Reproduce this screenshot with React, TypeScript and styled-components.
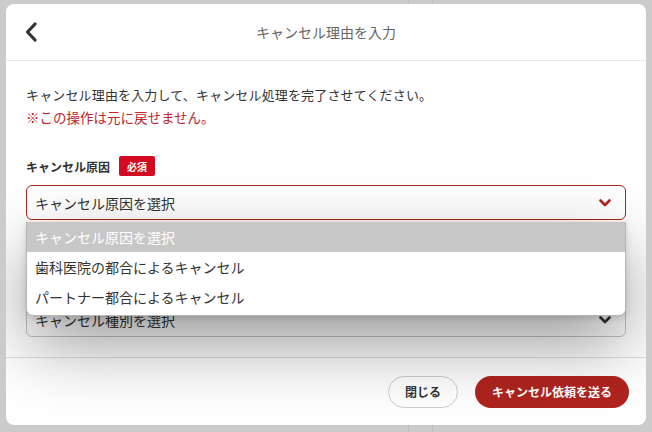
import React from 'react';
import styled, { createGlobalStyle } from 'styled-components';

const GlobalStyle = createGlobalStyle`
    * {
        box-sizing: border-box;
    }
    body {
        margin: 0;
        font-family: "Noto Sans CJK JP", "Noto Sans", sans-serif;
        background: #cbcbcb;
        color: #333;
    }
`;

const RED = '#b0241e';

const reasons = ['キャンセル原因を選択', '歯科医院の都合によるキャンセル', 'パートナー都合によるキャンセル'];

function ChevronDown({ color }: { color: string }) {
    return (
        <svg width="12" height="8" viewBox="0 0 12 8">
            <path d="M1.5 1.5 L6 6 L10.5 1.5" fill="none" stroke={color} strokeWidth="2.6" strokeLinecap="round" strokeLinejoin="round" />
        </svg>
    );
}

function App() {
    return (
        <>
            <GlobalStyle />
            <Page>
                {/* 背景のページ (オーバーレイで隠れている) */}
                <Backdrop>
                    <BackCol />
                    <BackCol />
                    <BackCol />
                </Backdrop>

                <Modal>
                    <Header>
                        <BackButton aria-label="戻る">
                            <svg width="14" height="20" viewBox="0 0 14 20">
                                <path d="M11 2 L3.5 10 L11 18" fill="none" stroke="#333" strokeWidth="3.2" strokeLinecap="round" strokeLinejoin="round" />
                            </svg>
                        </BackButton>
                        <Title>キャンセル理由を入力</Title>
                    </Header>

                    <Body>
                        <Lead>キャンセル理由を入力して、キャンセル処理を完了させてください。</Lead>
                        <Warning>※この操作は元に戻せません。</Warning>

                        <Field>
                            <LabelRow>
                                <Label>キャンセル原因</Label>
                                <Required>必須</Required>
                            </LabelRow>
                            <SelectBox $active>
                                <SelectText>キャンセル原因を選択</SelectText>
                                <ChevronDown color={RED} />
                            </SelectBox>
                            <OptionList>
                                {reasons.map((r, i) => (
                                    <OptionItem key={r} $highlighted={i === 0}>
                                        {r}
                                    </OptionItem>
                                ))}
                            </OptionList>
                        </Field>

                        {/* 2つ目の項目 (ラベルはドロップダウンの下に隠れている) */}
                        <Field $spaced>
                            <SelectBox>
                                <SelectText>キャンセル種別を選択</SelectText>
                                <ChevronDown color="#333" />
                            </SelectBox>
                        </Field>
                    </Body>

                    <Footer>
                        <OutlineButton>閉じる</OutlineButton>
                        <PrimaryButton>キャンセル依頼を送る</PrimaryButton>
                    </Footer>
                </Modal>
            </Page>
        </>
    );
}

export default App;

const Page = styled.div`
    position: relative;
    width: 652px;
    height: 432px;
    overflow: hidden;
    background: #cbcbcb;
`;

const Backdrop = styled.div`
    display: grid;
    grid-template-columns: 409px 24px 1fr;
    height: 100%;
`;

const BackCol = styled.div`
    border-right: 1px solid #bdbdbd;

    &:last-child {
        border-right: none;
    }
`;

const Modal = styled.div`
    position: absolute;
    top: 4px;
    left: 6px;
    width: 640px;
    height: 421px;

    display: flex;
    flex-direction: column;

    background: #fff;
    border-radius: 8px;
    overflow: hidden;
`;

const Header = styled.div`
    position: relative;
    height: 57px;
    flex-shrink: 0;

    display: flex;
    align-items: center;
    justify-content: center;

    border-bottom: 1px solid #e6e6e6;
`;

const BackButton = styled.div`
    position: absolute;
    left: 18px;
    top: 18px;

    display: flex;
`;

const Title = styled.h1`
    margin: 0;

    font-size: 14px;
    font-weight: 400;
    color: #666;
    line-height: 20px;
`;

const Body = styled.div`
    padding: 23px 20px 20px;
    border-bottom: 1px solid #dedede;
`;

const Lead = styled.p`
    margin: 0;
    font-size: 13px;
    letter-spacing: 0.15px;
    line-height: 22px;
    color: #333;
`;

const Warning = styled.p`
    margin: 0;
    font-size: 13.5px;
    line-height: 22px;
    color: #c0262b;
`;

const Field = styled.div<{ $spaced?: boolean }>`
    position: relative;
    margin-top: ${(p) => (p.$spaced ? '82px' : '28px')};
`;

const LabelRow = styled.div`
    display: flex;
    align-items: center;
    gap: 9px;

    height: 20px;
    margin-bottom: 9px;
`;

const Label = styled.span`
    font-size: 12px;
    font-weight: 700;
    color: #333;
`;

const Required = styled.span`
    display: inline-flex;
    align-items: center;
    justify-content: center;

    width: 36px;
    height: 20px;
    border-radius: 2px;

    background: #d40a22;
    color: #fff;
    font-size: 10px;
    font-weight: 700;
`;

const SelectBox = styled.div<{ $active?: boolean }>`
    display: flex;
    align-items: center;
    justify-content: space-between;

    height: 35px;
    padding: 0 14px 0 8px;

    border: 1px solid ${(p) => (p.$active ? RED : '#c4c4c4')};
    border-radius: 6px;
    background: #fff;
`;

const SelectText = styled.span`
    font-size: 14px;
    color: #333;
`;

const OptionList = styled.div`
    position: absolute;
    top: 66px;
    left: 0;
    right: 0;
    z-index: 2;

    padding-bottom: 3px;

    background: #fff;
    border: 1px solid #b5b5b5;
    border-top: none;
    border-radius: 0 0 7px 7px;
    overflow: hidden;

    box-shadow: 0 28px 70px rgba(0, 0, 0, 0.4), 0 2px 6px rgba(0, 0, 0, 0.15);
`;

const OptionItem = styled.div<{ $highlighted?: boolean }>`
    height: 30px;
    padding: 0 8px;

    display: flex;
    align-items: center;

    font-size: 14px;
    color: ${(p) => (p.$highlighted ? '#fff' : '#333')};
    background: ${(p) => (p.$highlighted ? '#c7c7c7' : '#fff')};
`;

const Footer = styled.div`
    flex: 1;

    display: flex;
    align-items: center;
    justify-content: flex-end;
    gap: 17px;

    padding: 0 17px;
`;

const OutlineButton = styled.button`
    height: 32px;
    padding: 0 16px;

    border: 1px solid #cfcfcf;
    border-radius: 16px;
    background: #fff;

    font-family: inherit;
    font-size: 12px;
    font-weight: 700;
    color: #333;
`;

const PrimaryButton = styled.button`
    height: 32px;
    padding: 0 17px;

    border: none;
    border-radius: 16px;
    background: ${RED};

    font-family: inherit;
    font-size: 12px;
    font-weight: 700;
    color: #fff;
`;
